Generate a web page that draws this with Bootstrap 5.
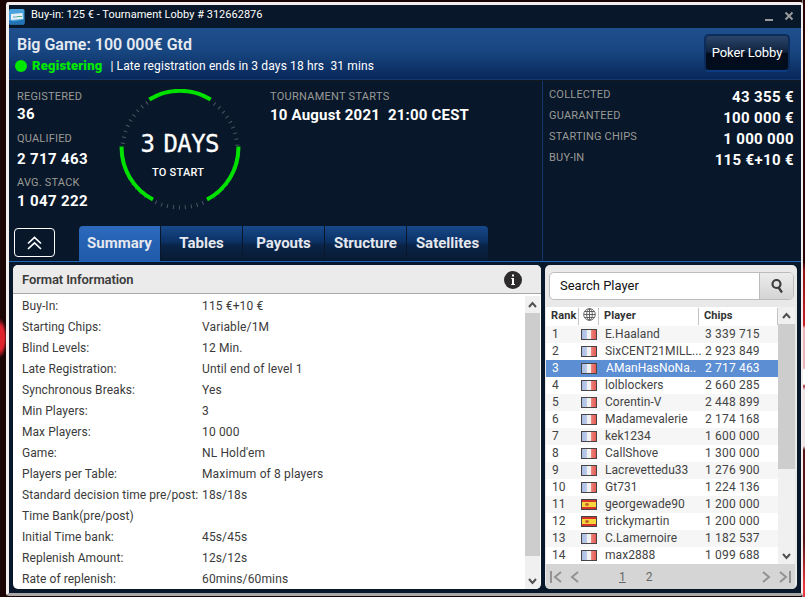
<!DOCTYPE html>
<html lang="en">
<head>
<meta charset="utf-8">
<title>Tournament Lobby</title>
<link href="https://cdn.jsdelivr.net/npm/bootstrap@5.3.0/dist/css/bootstrap.min.css" rel="stylesheet">
<style>
html,body{height:597px;overflow:hidden}
body{width:805px;font-family:Roboto,"Liberation Sans",sans-serif;font-size:12px;line-height:1.2;color:#333;padding:2px 2px 1px 6px;
 background:radial-gradient(ellipse 7px 20px at 0 338px,#e0222c 0 60%,transparent),linear-gradient(90deg,#1a0404 0 802px,#8a8585 802px 803px,transparent 803px),linear-gradient(#280404 0 262px,#8c1418 270px,#c8202a 325px,#e8b4b8 328px 368px,#fff 370px 384px,#a03038 386px,#f0e4e6 390px 446px,#58161c 450px 540px,#e83840 585px);white-space:nowrap}
.win{border:3px solid #f4efef;border-right-width:2px;border-bottom:3px solid #a9a6a6;border-radius:3px;background:#081729;height:594px;width:797px}
.titlebar{height:23px;color:#fff;font-size:11px;padding:0 8px 3px 0}
.titletext{margin-left:6px;letter-spacing:.02px}
.hero{height:52px;background:linear-gradient(#1f4f8d,#184681 45%,#08285a);border-bottom:1px solid #14386c;color:#fff;padding:8px 11px 0 8px}
.game{font-size:16px;font-weight:600;color:#e6ebf2;line-height:18px;height:22px}
.reg{color:#00e800;font-size:13px;font-weight:900;letter-spacing:.2px;margin:0 8px 0 5px}
.sub{font-size:12px;letter-spacing:.13px;line-height:16px}
.sub svg{margin-left:-2px}
.lobby{width:86px;height:38px;margin-top:-2px;border:2px solid #0c2c5c;border-bottom-color:#0b3c82;border-radius:5px;background:linear-gradient(#2b456a,#10233e 48%,#010b1b 50%,#020d1d);color:#fff;font-size:13px;padding:0;letter-spacing:-.1px}
.stats{height:181px;border-top:1px solid #10191f}
.lbl{font-size:11px;color:#9a9a96;letter-spacing:.2px;line-height:14px}
.val{font-size:15px;font-weight:700;color:#fff;letter-spacing:.35px;line-height:18px}
.s-left{width:534px;border-right:1px solid #14366a}
.nums{width:105px;padding:9px 0 0 8px}
.nums .val{padding-top:1px;margin-bottom:9px}
.nums .val.low{padding-top:4px;margin-bottom:8px}
.nums .val.last{padding-top:2px;margin-bottom:0}
.starts{padding:9px 0 0 26px}
.starts .val{letter-spacing:.2px;padding-top:2px}
.starts .lbl,.starts .val{padding-left:3px}
.starts .lbl{letter-spacing:.27px}
.s-right{padding:7px 7px 0 6px}
.s-right>div{height:21px}
.dial{width:122px;height:122px;margin-top:8px;margin-left:5px}
.lobbytabs{height:35px;gap:1px;border:0}
.lobbytabs .nav-link{width:81px;height:35px;border:0;border-radius:0;padding:0;font-size:15px;font-weight:700;color:#e5e8ee;text-align:center;line-height:35px;background:linear-gradient(#17498b,#0c3164 45%,#0a2449 55%,#081a30);margin:0}
.lobbytabs .nav-link.active{background:linear-gradient(#2d69bd,#2561b2 50%,#215baa);color:#e5e8ee;border-radius:4px 0 0 0}
.lobbytabs li:last-child .nav-link{border-radius:0 4px 0 0}
.up{width:41px;height:29px;border:1px solid #fff;border-radius:4px;padding:0;margin:2px 24px 0 5px}
.content-row{border-top:1px solid #1e65c0;padding:3px 4px 0 4px;gap:4px}
.pane{height:324px;border-radius:5px;background:#fff;overflow:hidden}
.format{width:528px}
.f-head{height:29px;background:#ebebeb;border-bottom:1px solid #a8a8a8;font-size:13px;font-weight:600;color:#3c3c3c;padding:1px 19px 0 9px;letter-spacing:-.1px}
.f-list{padding-top:2px;height:295px;overflow:hidden}
.f-row{height:21px;line-height:21px;padding-left:9px;letter-spacing:.14px;color:#3b3b3b}
.f-row span:first-child{width:180px;letter-spacing:.06px}
.sb{width:15px;background:#f0f0f0}
.sb i{display:block;background:#cdcdcd}
.sb-format{height:293px;margin:2px 1px 0 0}
.sb-format i{height:243px}
.sb-players i{height:145px}
.plist{width:252px;background:#e9e9e9;padding:0 2px 0 1px}
.players{width:232px}
.search{height:28px;width:245px;margin:7px 0 7px 3px;border:1px solid #bcbcbc;border-radius:5px;background:#fff;overflow:hidden;font-size:13px;color:#111}
.search span{padding-left:10px}
.search button{width:34px;border:0;border-left:1px solid #bcbcbc;background:linear-gradient(#ececec,#d4d4d4);padding:0}
.t-head{height:19px;background:#fff;font-weight:700;font-size:11px;letter-spacing:.1px;padding-top:1px}
.t-head>div{border-right:1px solid #c4c4c4;height:17px;line-height:16px}
.t-head svg{display:block}
.c1{width:33px;padding-left:5px}.c2{width:20px;padding-left:4px}.c3{width:100px;padding-left:5px}.c4{width:79px;padding-left:5px}
.p-row{height:17px;line-height:17px;background:#fff;letter-spacing:.05px;color:#444}
.p-row:nth-child(even){background:#f6f6f6}
.p-row .c1{padding-left:6px}.p-row .c2{padding-left:2px}.p-row .c3{padding-left:6px}.p-row .c4{padding-left:6px;letter-spacing:.18px}
.p-row.sel{background:#5c8ed4;color:#fff}
.p-row.sel .c3{padding-left:7px}
.flag{display:block;width:16px;height:11px;border:1px solid #484444;margin-top:3px}
.fr{background:linear-gradient(90deg,#a9bde6 0,#bccbea 32%,#f1f1f1 36% 64%,#ea8078 68%,#e65b55)}
.es{background:radial-gradient(circle at 5px 4.5px,#c66a30 0 1.5px,transparent 2px),linear-gradient(#d8322c 0 25%,#f6d63b 25% 75%,#d8322c 75%)}
.pager{height:27px;background:#d5d5d5;font-size:12px;color:#666;padding:0 1px 1px 3px}
.pager .pg1{margin-left:40px;margin-right:20px}
</style>
<script src="https://cdn.jsdelivr.net/npm/bootstrap@5.3.0/dist/js/bootstrap.bundle.min.js"></script>
</head>
<body>
<div class="win d-flex flex-column">
 <div class="titlebar d-flex align-items-center">
  <svg width="16" height="16" viewBox="0 0 16 16" class="mt-1"><rect width="15.500" height="15.500" rx="1.500" fill="#4aa2dc"/><path d="M0 11l4 1.500 11.500-2V14a1.500 1.500 0 0 1-1.500 1.500H1.500A1.500 1.500 0 0 1 0 14z" fill="#2373b4"/><path d="M2 5l11.500-1 .5 6-12 1z" fill="#e4f0f6"/><path d="M4 8h4" stroke="#6aa0be"/><path d="M8 7.500h5" stroke="#4cae88"/></svg>
  <span class="titletext">Buy-in: 125 € - Tournament Lobby # 312662876</span>
  <svg class="ms-auto mt-1" width="30" height="12" viewBox="0 0 30 12" stroke="#999" stroke-width="2" fill="none"><path d="M2 9h8M22.500 1.500l7 7M29.500 1.500l-7 7"/></svg>
 </div>
 <div class="hero d-flex justify-content-between">
  <div>
   <div class="game">Big Game: 100 000€ Gtd</div>
   <div class="sub d-flex align-items-center"><svg width="12" height="12"><circle cx="6" cy="6" r="6" fill="#00e800"/></svg><span class="reg">Registering</span><span>| Late registration ends in 3 days 18 hrs&nbsp; 31 mins</span></div>
  </div>
  <button class="lobby btn">Poker Lobby</button>
 </div>
 <div class="stats d-flex">
  <div class="s-left d-flex flex-column justify-content-between">
   <div class="d-flex">
    <div class="nums">
     <div class="lbl">REGISTERED</div><div class="val">36</div>
     <div class="lbl">QUALIFIED</div><div class="val low">2 717 463</div>
     <div class="lbl">AVG. STACK</div><div class="val last">1 047 222</div>
    </div>
    <svg class="dial" viewBox="0 0 122 122" fill="none">
     <circle cx="61" cy="61" r="57.500" stroke="#4d5560" stroke-width="4" stroke-dasharray="1 5.021"/>
     <path d="M29.500 10.500A59.500 59.500 0 0 1 92.500 10.500L91 13.500H31zM0 58h6v5H0zM122 58h-6v5h6zM1 63L6 63 35 110 31 115zM121 63L116 63 87 110 91 115z" fill="#081729"/>
     <path d="M30.300 10.500A58.500 58.500 0 0 1 91.700 10.500M2.600 57.500A58.500 58.500 0 0 0 34 110.500M119.400 57.500A58.500 58.500 0 0 1 88 110.500" stroke="#00e100" stroke-width="4"/>
     <g font-family="DejaVu Sans Mono" font-size="24" fill="#fff" stroke="#fff" stroke-width=".3"><text x="21.500" y="63">3</text><text x="44.500" y="63" textLength="56">DAYS</text></g>
     <text x="33" y="87" textLength="52" font-size="11" font-weight="500" fill="#fff">TO START</text>
    </svg>
    <div class="starts"><div class="lbl">TOURNAMENT STARTS</div><div class="val">10 August 2021&nbsp; 21:00 CEST</div></div>
   </div>
   <div class="d-flex">
    <button class="up btn d-flex align-items-center justify-content-center"><svg width="15" height="14" viewBox="0 0 15 14" fill="none" stroke="#fff" stroke-width="1.700"><path d="M1 7.500l6.500-6 6.500 6M1 13l6.500-6 6.500 6"/></svg></button>
    <ul class="nav nav-tabs lobbytabs flex-nowrap">
     <li><a class="nav-link active">Summary</a></li><li><a class="nav-link">Tables</a></li><li><a class="nav-link">Payouts</a></li><li><a class="nav-link">Structure</a></li><li><a class="nav-link">Satellites</a></li>
    </ul>
   </div>
  </div>
  <div class="s-right flex-grow-1">
   <div class="d-flex justify-content-between"><span class="lbl">COLLECTED</span><span class="val">43 355 €</span></div>
   <div class="d-flex justify-content-between"><span class="lbl">GUARANTEED</span><span class="val">100 000 €</span></div>
   <div class="d-flex justify-content-between"><span class="lbl">STARTING CHIPS</span><span class="val">1 000 000</span></div>
   <div class="d-flex justify-content-between"><span class="lbl">BUY-IN</span><span class="val">115 €+10 €</span></div>
  </div>
 </div>
 <div class="content-row d-flex">
  <section class="pane format">
   <div class="f-head d-flex align-items-center justify-content-between"><span>Format Information</span>
    <svg width="18" height="18" viewBox="0 0 18 18"><circle cx="9" cy="9" r="9" fill="#2d2b2c"/><path d="M8 3.500h2v2H8zM7.200 7h2.800v6h1v1H7.200v-1H8V8h-.8z" fill="#fff"/></svg></div>
   <div class="d-flex justify-content-between">
    <div class="f-list">
     <div class="f-row d-flex"><span>Buy-In:</span><span>115 €+10 €</span></div>
     <div class="f-row d-flex"><span>Starting Chips:</span><span>Variable/1M</span></div>
     <div class="f-row d-flex"><span>Blind Levels:</span><span>12 Min.</span></div>
     <div class="f-row d-flex"><span>Late Registration:</span><span>Until end of level 1</span></div>
     <div class="f-row d-flex"><span>Synchronous Breaks:</span><span>Yes</span></div>
     <div class="f-row d-flex"><span>Min Players:</span><span>3</span></div>
     <div class="f-row d-flex"><span>Max Players:</span><span>10 000</span></div>
     <div class="f-row d-flex"><span>Game:</span><span>NL Hold'em</span></div>
     <div class="f-row d-flex"><span>Players per Table:</span><span>Maximum of 8 players</span></div>
     <div class="f-row d-flex"><span>Standard decision time pre/post:</span><span>18s/18s</span></div>
     <div class="f-row d-flex"><span>Time Bank(pre/post)</span></div>
     <div class="f-row d-flex"><span>Initial Time bank:</span><span>45s/45s</span></div>
     <div class="f-row d-flex"><span>Replenish Amount:</span><span>12s/12s</span></div>
     <div class="f-row d-flex"><span>Rate of replenish:</span><span>60mins/60mins</span></div>
    </div>
    <div class="sb sb-format d-flex flex-column">
     <svg width="15" height="17" fill="none" stroke="#505050" stroke-width="2"><path d="M4 11l3.500-4 3.500 4"/></svg><i></i><span class="flex-grow-1"></span><svg width="15" height="17" fill="none" stroke="#505050" stroke-width="2"><path d="M4 7l3.500 4L11 7"/></svg>
    </div>
   </div>
  </section>
  <section class="pane plist">
   <div class="search d-flex"><span class="flex-grow-1 d-flex align-items-center">Search Player</span><button><svg width="16" height="16" viewBox="0 0 16 16" fill="none" stroke="#3c3c3c" stroke-width="2.200"><circle cx="7.500" cy="6" r="4"/><path d="M9.500 9.500l3.500 5"/></svg></button></div>
   <div class="d-flex">
    <div class="players">
     <div class="t-head d-flex"><div class="c1">Rank</div><div class="c2"><svg width="13" height="13" viewBox="0 0 13 13" fill="none" stroke="#555" stroke-width=".9"><circle cx="6.500" cy="6.500" r="5.800"/><ellipse cx="6.500" cy="6.500" rx="2.800" ry="5.800"/><path d="M6.500 1v11M.7 6.500h11.600M1.600 3.500h9.800M1.600 9.500h9.800"/></svg></div><div class="c3">Player</div><div class="c4">Chips</div></div>
     <div class="p-row d-flex"><span class="c1">1</span><span class="c2"><i class="flag fr"></i></span><span class="c3">E.Haaland</span><span class="c4">3 339 715</span></div>
     <div class="p-row d-flex"><span class="c1">2</span><span class="c2"><i class="flag fr"></i></span><span class="c3">SixCENT21MILL...</span><span class="c4">2 923 849</span></div>
     <div class="p-row d-flex sel"><span class="c1">3</span><span class="c2"><i class="flag fr"></i></span><span class="c3">AManHasNoNa..</span><span class="c4">2 717 463</span></div>
     <div class="p-row d-flex"><span class="c1">4</span><span class="c2"><i class="flag fr"></i></span><span class="c3">lolblockers</span><span class="c4">2 660 285</span></div>
     <div class="p-row d-flex"><span class="c1">5</span><span class="c2"><i class="flag fr"></i></span><span class="c3">Corentin-V</span><span class="c4">2 448 899</span></div>
     <div class="p-row d-flex"><span class="c1">6</span><span class="c2"><i class="flag fr"></i></span><span class="c3">Madamevalerie</span><span class="c4">2 174 168</span></div>
     <div class="p-row d-flex"><span class="c1">7</span><span class="c2"><i class="flag fr"></i></span><span class="c3">kek1234</span><span class="c4">1 600 000</span></div>
     <div class="p-row d-flex"><span class="c1">8</span><span class="c2"><i class="flag fr"></i></span><span class="c3">CallShove</span><span class="c4">1 300 000</span></div>
     <div class="p-row d-flex"><span class="c1">9</span><span class="c2"><i class="flag fr"></i></span><span class="c3">Lacrevettedu33</span><span class="c4">1 276 900</span></div>
     <div class="p-row d-flex"><span class="c1">10</span><span class="c2"><i class="flag fr"></i></span><span class="c3">Gt731</span><span class="c4">1 224 136</span></div>
     <div class="p-row d-flex"><span class="c1">11</span><span class="c2"><i class="flag es"></i></span><span class="c3">georgewade90</span><span class="c4">1 200 000</span></div>
     <div class="p-row d-flex"><span class="c1">12</span><span class="c2"><i class="flag es"></i></span><span class="c3">trickymartin</span><span class="c4">1 200 000</span></div>
     <div class="p-row d-flex"><span class="c1">13</span><span class="c2"><i class="flag fr"></i></span><span class="c3">C.Lamernoire</span><span class="c4">1 182 537</span></div>
     <div class="p-row d-flex"><span class="c1">14</span><span class="c2"><i class="flag fr"></i></span><span class="c3">max2888</span><span class="c4">1 099 688</span></div>
    </div>
    <div class="sb sb-players d-flex flex-column flex-grow-1">
     <svg width="17" height="17" fill="none" stroke="#505050" stroke-width="2"><path d="M5 11l3.500-4 3.500 4"/></svg><i></i><span class="flex-grow-1"></span><svg width="17" height="17" fill="none" stroke="#505050" stroke-width="2"><path d="M5 7l3.500 4L12 7"/></svg>
    </div>
   </div>
   <div class="pager d-flex align-items-center">
    <svg width="30" height="14" fill="none" stroke="#929292" stroke-width="2"><path d="M2 1v12M12 2L6 7l6 5M29 2l-6 5 6 5"/></svg>
    <u class="pg1">1</u><span>2</span>
    <svg class="ms-auto" width="32" height="14" fill="none" stroke="#929292" stroke-width="2"><path d="M1 2l6 5-6 5M18 2l6 5-6 5M28 1v12"/></svg>
   </div>
  </section>
 </div>
</div>
</body>
</html>
